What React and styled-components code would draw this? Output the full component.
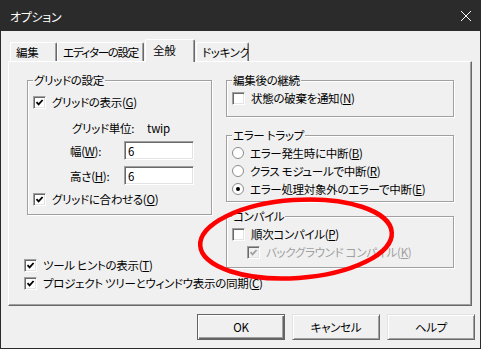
import React from "react";
import styled, { createGlobalStyle } from "styled-components";

const GlobalStyle = createGlobalStyle`
  html, body {
    margin: 0;
    padding: 0;
  }
  body {
    font-family: "Noto Sans CJK JP", "Noto Sans", sans-serif;
    font-size: 11.5px;
    letter-spacing: -0.3px;
    font-feature-settings: "palt";
    color: #000;
  }
`;

const Window = styled.div`
  position: relative;
  width: 481px;
  height: 349px;
  box-sizing: border-box;
  border: 1px solid #2b2b2b;
  background: #f0f0f0;
  display: flex;
  flex-direction: column;
  overflow: hidden;
`;

const TitleBar = styled.div`
  height: 30px;
  flex-shrink: 0;
  background: #2b2b2b;
  color: #fff;
  font-size: 12px;
  display: flex;
  align-items: center;
  justify-content: space-between;
  padding: 0 9px 0 9px;
`;

const Body = styled.div`
  flex: 1;
  padding: 8px 7px 0 7px;
  display: flex;
  flex-direction: column;
`;

const TabRow = styled.div`
  display: flex;
  align-items: flex-end;
  height: 22px;
  padding-left: 2px;
`;

const Tab = styled.div`
  position: relative;
  box-sizing: border-box;
  width: ${(p) => p.$w}px;
  height: ${(p) => (p.$active ? 23 : 19)}px;
  margin-left: ${(p) => p.$ml || 0}px;
  margin-bottom: ${(p) => (p.$active ? -1 : 0)}px;
  padding-left: ${(p) => (p.$active ? 7 : 5)}px;
  padding-bottom: ${(p) => (p.$active ? 2 : 0)}px;
  display: flex;
  align-items: center;
  white-space: nowrap;
  overflow: hidden;
  letter-spacing: ${(p) => (p.$tight ? -1.3 : -0.3)}px;
  background: #f0f0f0;
  border-top: 1px solid #fff;
  border-left: 1px solid #fff;
  border-right: 1px solid #696969;
  box-shadow: inset -1px 0 0 #a0a0a0;
  border-radius: 2px 2px 0 0;
  z-index: ${(p) => (p.$active ? 1 : 0)};
`;

const Panel = styled.div`
  box-sizing: border-box;
  width: 464px;
  height: 245px;
  border-top: 1px solid #fff;
  border-left: 1px solid #fff;
  border-right: 1px solid #696969;
  border-bottom: 1px solid #696969;
  box-shadow: inset -1px -1px 0 #a0a0a0;
  padding: 18px 17px 0 18px;
  display: flex;
  gap: 14px;
`;

const Column = styled.div`
  width: ${(p) => p.$w}px;
  display: flex;
  flex-direction: column;
`;

const Group = styled.div`
  position: relative;
  box-sizing: border-box;
  height: ${(p) => p.$h}px;
  margin-top: ${(p) => p.$mt || 0}px;
  padding: ${(p) => p.$pt || 8}px 0 0 5px;
  border: 1px solid #a0a0a0;
  box-shadow: inset 1px 1px 0 #fff, 1px 1px 0 #fff;
`;

const GroupTitle = styled.span`
  position: absolute;
  top: -9px;
  left: 5px;
  padding: 0 1px;
  line-height: 16px;
  background: #f0f0f0;
  white-space: nowrap;
`;

const Row = styled.div`
  display: flex;
  align-items: center;
  height: ${(p) => p.$h || 18}px;
  margin-top: ${(p) => p.$mt || 0}px;
  margin-left: ${(p) => p.$ml || 0}px;
  gap: ${(p) => (p.$gap === undefined ? 6 : p.$gap)}px;
  white-space: nowrap;
  color: ${(p) => (p.$disabled ? "#a0a0a0" : "#000")};
`;

const Box = styled.span`
  width: 13px;
  height: 13px;
  box-sizing: border-box;
  flex-shrink: 0;
  border: 1px solid;
  border-color: #a0a0a0 #fff #fff #a0a0a0;
  box-shadow: inset 1px 1px 0 #696969, inset -1px -1px 0 #e3e3e3;
  background: ${(p) => (p.$disabled ? "#f0f0f0" : "#fff")};
  display: inline-flex;
  align-items: center;
  justify-content: center;
`;

const FieldLabel = styled.span`
  width: 54px;
`;

const Field = styled.input`
  width: 70px;
  height: 19px;
  box-sizing: border-box;
  border: 1px solid;
  border-color: #a0a0a0 #fff #fff #a0a0a0;
  box-shadow: inset 1px 1px 0 #696969, inset -1px -1px 0 #e3e3e3;
  background: #fff;
  padding: 0 0 0 3px;
  margin: 0;
  font: inherit;
  font-feature-settings: "palt";
  letter-spacing: inherit;
  outline: none;
`;

const Unit = styled.span`
  margin-left: 7px;
`;

const ButtonRow = styled.div`
  display: flex;
  justify-content: flex-end;
  gap: 7px;
  margin-top: 8px;
  margin-right: -2px;
`;

const Button = styled.button`
  width: 88px;
  height: 26px;
  box-sizing: border-box;
  margin: 0;
  padding: 0;
  font: inherit;
  font-feature-settings: "palt";
  letter-spacing: inherit;
  color: #000;
  background: #f0f0f0;
  border: 1px solid;
  border-color: ${(p) =>
    p.$default ? "#646464" : "#e3e3e3 #696969 #696969 #e3e3e3"};
  box-shadow: ${(p) =>
    p.$default
      ? "inset 1px 1px 0 #fff, inset -1px -1px 0 #646464, inset -2px -2px 0 #a0a0a0"
      : "inset 1px 1px 0 #fff, inset -1px -1px 0 #a0a0a0"};
`;

const Annotation = styled.svg`
  position: absolute;
  left: 0;
  top: 0;
  pointer-events: none;
`;

const Check = ({ checked, disabled }) => (
  <Box $disabled={disabled}>
    {checked && (
      <svg width="9" height="9" viewBox="0 0 9 9">
        <polyline
          points="1.5,4.2 3.6,6.4 7.6,2"
          fill="none"
          stroke={disabled ? "#a0a0a0" : "#000"}
          strokeWidth="1.8"
        />
      </svg>
    )}
  </Box>
);

const Radio = ({ checked }) => (
  <svg width="12" height="12" viewBox="0 0 12 12" style={{ flexShrink: 0 }}>
    <circle cx="6" cy="6" r="5.5" fill="#fff" stroke="#8a8a8a" />
    {checked && <circle cx="6" cy="6" r="2" fill="#000" />}
  </svg>
);

const CheckItem = ({ checked, disabled, text, keyChar, ...rest }) => (
  <Row $disabled={disabled} {...rest}>
    <Check checked={checked} disabled={disabled} />
    <span>
      {text}(<u>{keyChar}</u>)
    </span>
  </Row>
);

const RadioItem = ({ checked, text, keyChar }) => (
  <Row>
    <Radio checked={checked} />
    <span>
      {text}(<u>{keyChar}</u>)
    </span>
  </Row>
);

export default function App() {
  return (
    <>
      <GlobalStyle />
      <Window>
        <TitleBar>
          <span>オプション</span>
          <svg width="10" height="10" viewBox="0 0 10 10">
            <path d="M0 0 L10 10 M10 0 L0 10" stroke="#fff" strokeWidth="1" />
          </svg>
        </TitleBar>
        <Body>
          <TabRow>
            <Tab $w={47}>編集</Tab>
            <Tab $w={87} $tight>
              エディターの設定
            </Tab>
            <Tab $w={50} $ml={1} $active>
              全般
            </Tab>
            <Tab $w={53} $ml={1}>
              ドッキング
            </Tab>
          </TabRow>
          <Panel>
            <Column $w={185}>
              <Group $h={135} $pt={12}>
                <GroupTitle>グリッドの設定</GroupTitle>
                <CheckItem checked text="グリッドの表示" keyChar="G" />
                <Row $mt={8} $ml={39}>
                  グリッド単位:<Unit>twip</Unit>
                </Row>
                <Row $h={19} $mt={4} $ml={37} $gap={0}>
                  <FieldLabel>
                    幅(<u>W</u>):
                  </FieldLabel>
                  <Field readOnly value="6" />
                </Row>
                <Row $h={19} $mt={6} $ml={37} $gap={0}>
                  <FieldLabel>
                    高さ(<u>H</u>):
                  </FieldLabel>
                  <Field readOnly value="6" />
                </Row>
                <CheckItem $mt={5} checked text="グリッドに合わせる" keyChar="O" />
              </Group>
              <CheckItem $mt={41} $ml={-3} checked text="ツール ヒントの表示" keyChar="T" />
              <CheckItem
                $ml={-3}
                checked
                text="プロジェクト ツリーとウィンドウ表示の同期"
                keyChar="C"
              />
            </Column>
            <Column $w={228}>
              <Group $h={37}>
                <GroupTitle>編集後の継続</GroupTitle>
                <CheckItem text="状態の破棄を通知" keyChar="N" />
              </Group>
              <Group $h={67} $mt={18}>
                <GroupTitle>エラー トラップ</GroupTitle>
                <RadioItem text="エラー発生時に中断" keyChar="B" />
                <RadioItem text="クラス モジュールで中断" keyChar="R" />
                <RadioItem checked text="エラー処理対象外のエラーで中断" keyChar="E" />
              </Group>
              <Group $h={52} $mt={14}>
                <GroupTitle>コンパイル</GroupTitle>
                <CheckItem text="順次コンパイル" keyChar="P" />
                <CheckItem
                  $ml={15}
                  checked
                  disabled
                  text="バックグラウンド コンパイル"
                  keyChar="K"
                />
              </Group>
            </Column>
          </Panel>
          <ButtonRow>
            <Button $default>OK</Button>
            <Button>キャンセル</Button>
            <Button>ヘルプ</Button>
          </ButtonRow>
        </Body>
        <Annotation width="481" height="349" viewBox="0 0 481 349">
          <ellipse
            cx="295"
            cy="238"
            rx="96"
            ry="39"
            transform="rotate(-4 295 238)"
            fill="none"
            stroke="#ff0000"
            strokeWidth="4.5"
          />
        </Annotation>
      </Window>
    </>
  );
}
